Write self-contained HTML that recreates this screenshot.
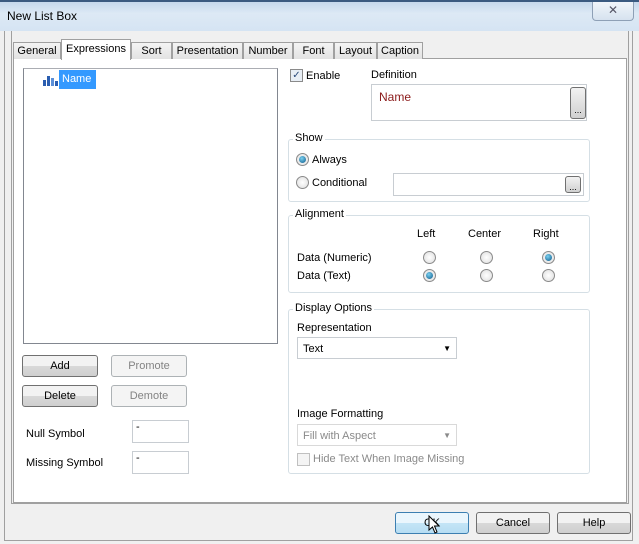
<html><head><style>
body{margin:0;width:639px;height:544px;overflow:hidden;background:#f0f0f0;font-family:"Liberation Sans",sans-serif;font-size:11px;color:#000;position:relative}
.a{position:absolute}
.tab{position:absolute;top:42px;height:17px;box-sizing:border-box;border:1px solid #a0a0a0;border-bottom:none;background:linear-gradient(#f4f4f4,#e2e2e2);text-align:center;line-height:16px}
.gb{position:absolute;border:1px solid #d5dfe5;border-radius:3px}
.gl{position:absolute;top:-8px;left:4px;background:#fff;padding:0 2px}
.rb{position:absolute;width:11px;height:11px;border-radius:50%;border:1px solid #8a8a8a;background:radial-gradient(#fff,#dcdcdc)}
.rb.on::after{content:"";position:absolute;left:2px;top:2px;width:7px;height:7px;border-radius:50%;background:radial-gradient(circle at 40% 35%,#7ad0f0,#0d5a8a)}
.btn{position:absolute;border:1px solid #707070;border-radius:3px;background:linear-gradient(#f2f2f2 50%,#d9d9d9 50%,#cfcfcf);text-align:center;height:20px;line-height:20px}
.dis{border-color:#adb2b5;background:#f4f4f4;color:#838383}
.inp{position:absolute;background:#fff;border:1px solid #c8cdd2}
.dots{position:absolute;border:1px solid #707070;border-radius:3px;background:linear-gradient(#f2f2f2,#d0d0d0);font-size:9px;text-align:center}
</style></head><body>
<div class="a" style="left:0;top:0;width:639px;height:31px;background:linear-gradient(#c5d8ec,#dde9f5 40%,#d5e4f3);border-top:2px solid #3a5a80;box-sizing:border-box"></div>
<div class="a" style="left:7px;top:9px;font-size:12px">New List Box</div>
<div class="a" style="left:592px;top:2px;width:40px;height:18px;border:1px solid #8ea0b6;border-top:none;border-radius:0 0 4px 4px;background:linear-gradient(#f0f5fa,#d6e2ef);text-align:center;line-height:17px;color:#556;font-size:12px">✕</div>
<div class="a" style="left:4px;top:31px;width:629px;height:510px;border:1px solid #a0a0a0;border-top:none;box-sizing:border-box"></div>
<div class="a" style="left:11px;top:31px;width:618px;height:473px;border:1px solid #a0a0a0;box-sizing:border-box;border-top:none"></div>
<div class="a" style="left:13px;top:58px;width:614px;height:445px;background:#fff;border:1px solid #a0a0a0;box-sizing:border-box"></div>
<div class="tab" style="left:13px;width:48px">General</div>
<div class="tab" style="left:61px;top:39px;height:21px;background:#fff;width:70px;z-index:2;line-height:18px">Expressions</div>
<div class="tab" style="left:131px;width:41px">Sort</div>
<div class="tab" style="left:172px;width:71px">Presentation</div>
<div class="tab" style="left:243px;width:50px">Number</div>
<div class="tab" style="left:293px;width:41px">Font</div>
<div class="tab" style="left:334px;width:43px">Layout</div>
<div class="tab" style="left:377px;width:46px">Caption</div>

<div class="a" style="left:23px;top:68px;width:253px;height:274px;border:1px solid #828790;border-top-color:#abadb3;background:#fff"></div>
<svg class="a" style="left:42px;top:74px" width="16" height="12"><rect x="1" y="6" width="3" height="6" fill="#2a5db0"/><rect x="5" y="2" width="3" height="10" fill="#2a5db0"/><rect x="9" y="4" width="3" height="8" fill="#5b8fd8"/><rect x="13" y="7" width="3" height="5" fill="#2a5db0"/></svg>
<div class="a" style="left:59px;top:70px;width:37px;height:19px;background:#3399ff;color:#fff;line-height:19px;padding-left:3px;box-sizing:border-box">Name</div>

<div class="btn" style="left:22px;top:355px;width:74px">Add</div>
<div class="btn dis" style="left:111px;top:355px;width:74px">Promote</div>
<div class="btn" style="left:22px;top:385px;width:74px">Delete</div>
<div class="btn dis" style="left:111px;top:385px;width:74px">Demote</div>
<div class="a" style="left:26px;top:428px">Null Symbol</div>
<div class="inp" style="left:132px;top:420px;width:52px;height:21px;padding-left:3px">-</div>
<div class="a" style="left:26px;top:457px">Missing Symbol</div>
<div class="inp" style="left:132px;top:451px;width:52px;height:21px;padding-left:3px">-</div>

<div class="a" style="left:290px;top:69px;width:11px;height:11px;border:1px solid #8a8a8a;background:#e8eef5;font-size:10px;line-height:11px;text-align:center;color:#2a4a7a">✓</div>
<div class="a" style="left:306px;top:70px">Enable</div>
<div class="a" style="left:371px;top:69px">Definition</div>
<div class="inp" style="left:371px;top:84px;width:216px;height:37px;color:#8b1a1a;font-size:12px;padding:5px 0 0 7px;box-sizing:border-box">Name</div>
<div class="dots" style="left:570px;top:87px;width:14px;height:30px;line-height:44px">...</div>

<div class="gb" style="left:288px;top:139px;width:300px;height:61px"><span class="gl">Show</span></div>
<div class="rb on" style="left:296px;top:153px"></div><div class="a" style="left:312px;top:154px">Always</div>
<div class="rb" style="left:296px;top:176px"></div><div class="a" style="left:312px;top:177px">Conditional</div>
<div class="inp" style="left:393px;top:173px;width:189px;height:21px"></div>
<div class="dots" style="left:565px;top:176px;width:14px;height:15px;line-height:20px">...</div>

<div class="gb" style="left:288px;top:215px;width:300px;height:76px"><span class="gl">Alignment</span></div>
<div class="a" style="left:417px;top:228px">Left</div><div class="a" style="left:468px;top:228px">Center</div><div class="a" style="left:533px;top:228px">Right</div>
<div class="a" style="left:297px;top:252px">Data (Numeric)</div><div class="a" style="left:297px;top:270px">Data (Text)</div>
<div class="rb" style="left:423px;top:251px"></div><div class="rb" style="left:480px;top:251px"></div><div class="rb on" style="left:542px;top:251px"></div>
<div class="rb on" style="left:423px;top:269px"></div><div class="rb" style="left:480px;top:269px"></div><div class="rb" style="left:542px;top:269px"></div>

<div class="gb" style="left:288px;top:309px;width:300px;height:163px"><span class="gl">Display Options</span></div>
<div class="a" style="left:297px;top:322px">Representation</div>
<div class="inp" style="left:297px;top:337px;width:160px;height:22px;line-height:22px;padding-left:5px;box-sizing:border-box">Text<span style="position:absolute;right:5px;font-size:8px">▼</span></div>
<div class="a" style="left:297px;top:408px">Image Formatting</div>
<div class="inp" style="left:297px;top:424px;width:160px;height:22px;line-height:22px;padding-left:5px;box-sizing:border-box;color:#8a8a8a;border-color:#d9d9d9">Fill with Aspect<span style="position:absolute;right:5px;font-size:8px">▼</span></div>
<div class="a" style="left:297px;top:453px;width:11px;height:11px;border:1px solid #c0c0c0;background:#f4f4f4"></div>
<div class="a" style="left:313px;top:453px;color:#8a8a8a">Hide Text When Image Missing</div>

<div class="btn" style="left:395px;top:512px;width:72px;border-color:#3c7fb1;background:linear-gradient(#eaf6fd 50%,#c4e5f6 50%,#b6ddf3)">OK</div>
<div class="btn" style="left:476px;top:512px;width:72px">Cancel</div>
<div class="btn" style="left:557px;top:512px;width:72px">Help</div>
<svg class="a" style="left:428px;top:515px" width="14" height="20"><path d="M1 1 L1 15 L4.5 12 L7 18 L9 17 L6.5 11 L11 11 Z" fill="#fff" stroke="#000"/></svg>
</body></html>
